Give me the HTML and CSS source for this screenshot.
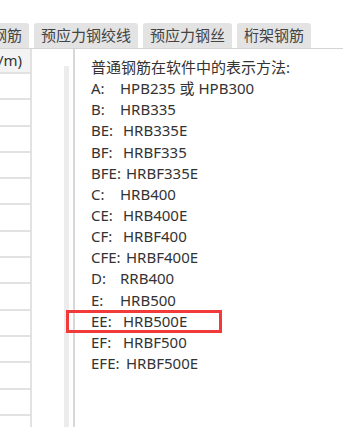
FILE: index.html
```html
<!DOCTYPE html>
<html lang="zh-CN">
<head>
    <meta charset="UTF-8">
    <meta name="viewport" content="width=device-width, initial-scale=1.0">
    <title>钢筋表示方法</title>
    <link rel="stylesheet" href="styles.css">
</head>
<body>
    <div class="top"></div>
    <div class="tabs">
        <div class="tab">普通钢筋</div>
        <div class="tab">预应力钢绞线</div>
        <div class="tab">预应力钢丝</div>
        <div class="tab">桁架钢筋</div>
    </div>
    <div class="panel">
        <div class="table">
            <div class="head"><span>重量(kg/m)</span></div>
            <div class="row"></div>
            <div class="row"></div>
            <div class="row"></div>
            <div class="row"></div>
            <div class="row"></div>
            <div class="row"></div>
            <div class="row"></div>
            <div class="row"></div>
            <div class="row"></div>
            <div class="row"></div>
            <div class="row"></div>
            <div class="row"></div>
            <div class="row"></div>
            <div class="row"></div>
        </div>
        <div class="spacer">
            <div class="track"></div>
        </div>
        <div class="content">
            <div class="title">普通钢筋在软件中的表示方法:</div>
            <div class="line"><span class="k1">A:</span>HPB235 或 HPB300</div>
            <div class="line"><span class="k1">B:</span>HRB335</div>
            <div class="line"><span class="k2">BE:</span>HRB335E</div>
            <div class="line"><span class="k2">BF:</span>HRBF335</div>
            <div class="line"><span class="k3">BFE:</span>HRBF335E</div>
            <div class="line"><span class="k1">C:</span>HRB400</div>
            <div class="line"><span class="k2">CE:</span>HRB400E</div>
            <div class="line"><span class="k2">CF:</span>HRBF400</div>
            <div class="line"><span class="k3">CFE:</span>HRBF400E</div>
            <div class="line"><span class="k1">D:</span>RRB400</div>
            <div class="line"><span class="k1">E:</span>HRB500</div>
            <div class="line"><span class="k2">EE:</span>HRB500E</div>
            <div class="line"><span class="k2">EF:</span>HRBF500</div>
            <div class="line"><span class="k3">EFE:</span>HRBF500E</div>
        </div>
        <div class="mark"></div>
    </div>
</body>
</html>
```

FILE: styles.css
```css
body {
    margin: 0;
    width: 343px;
    height: 427px;
    overflow: hidden;
    background-color: #fff;
    font-family: "Noto Sans", "Noto Sans CJK SC", sans-serif;
    font-size: 15px;
    color: #333;
}

.top {
    height: 23px;
}

.tabs {
    display: flex;
    gap: 5px;
    margin-left: -45px;
}

.tab {
    height: 25px;
    line-height: 25px;
    padding: 0 7px;
    background-color: #e3e3e3;
    border-radius: 3px 3px 0 0;
    color: #444;
    white-space: nowrap;
}

.panel {
    position: relative;
    display: flex;
    height: 378px;
    border-top: 1px solid #d4d4d4;
}

.table {
    width: 30px;
    border-right: 2px solid #e2e2e2;
}

.head {
    display: flex;
    justify-content: flex-end;
    height: 23px;
    line-height: 23px;
    padding-right: 8px;
    overflow: hidden;
    white-space: nowrap;
    background-color: #f3f3f3;
    border-bottom: 2px solid #e2e2e2;
}

.row {
    height: 24.3px;
    border-bottom: 2px solid #e2e2e2;
}

.spacer {
    width: 41px;
    display: flex;
    justify-content: flex-end;
    padding-right: 4px;
    box-sizing: border-box;
}

.track {
    width: 5px;
    margin-top: 17px;
    background-color: #ececec;
}

.content {
    flex: 1;
    border-left: 2px solid #d8d8d8;
    padding: 8px 0 0 16px;
}

.title,
.line {
    height: 21.15px;
    line-height: 21.15px;
    white-space: nowrap;
}

.k1,
.k2,
.k3 {
    display: inline-block;
}

.k1 {
    width: 29px;
}

.k2 {
    width: 32px;
}

.k3 {
    width: 35px;
}

.mark {
    position: absolute;
    left: 66px;
    top: 261px;
    width: 150px;
    height: 17px;
    border: 3px solid #f23a3a;
}
```
